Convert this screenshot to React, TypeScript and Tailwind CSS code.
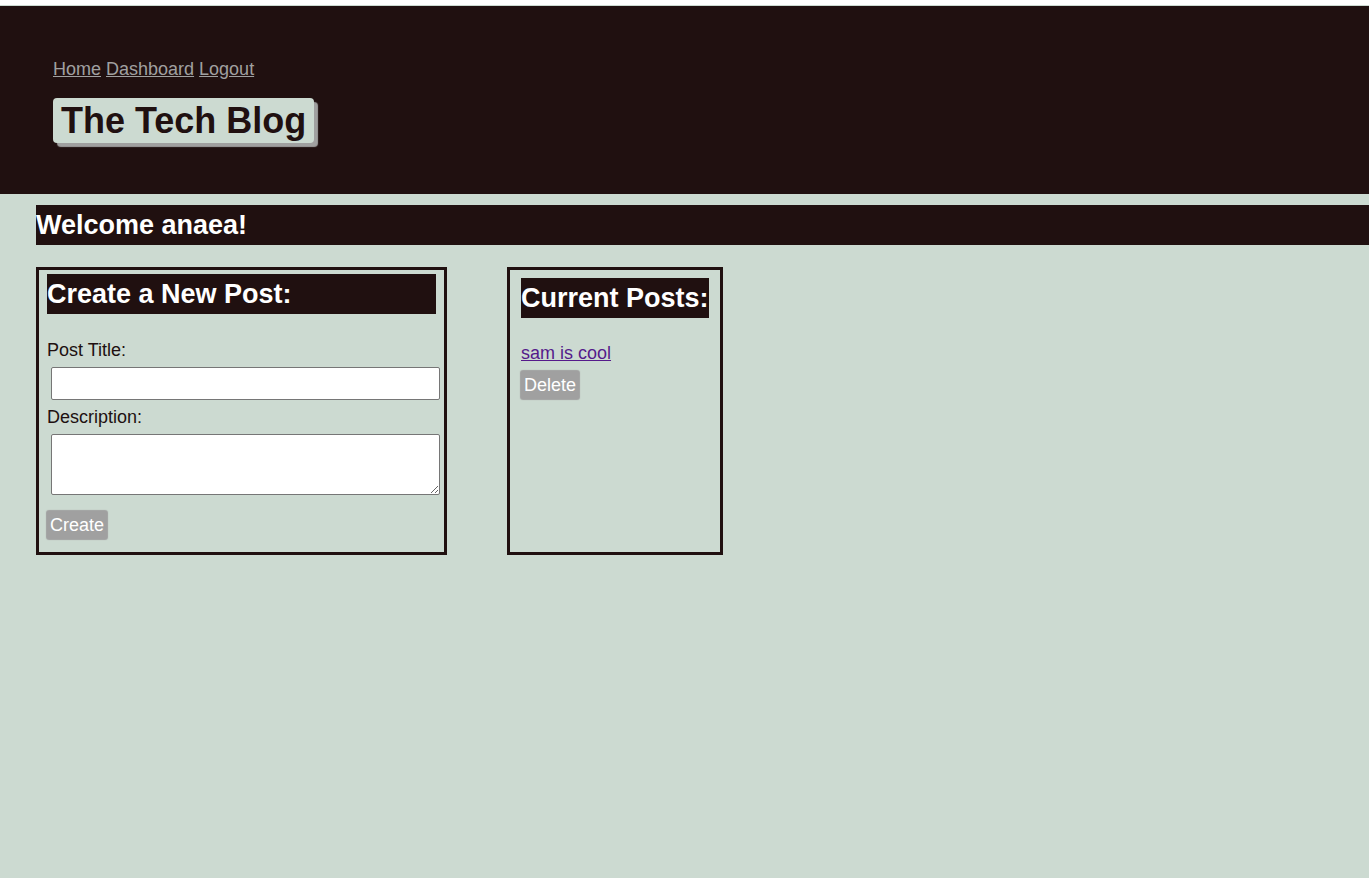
import React from "react";

const headingClass =
  "bg-[#201010] text-[27px] leading-[40px] font-bold text-white";

const buttonClass =
  "block cursor-pointer rounded-[2px] bg-[#a0a0a0] px-[3px] text-[18px] leading-7 text-white shadow-[0_0_1px_1px_#a0a0a0]";

const fieldClass =
  "mt-1 ml-1 block w-full rounded-[2px] border border-[#767676] bg-white px-1";

const navLinks = [
  { label: "Home", href: "#home" },
  { label: "Dashboard", href: "#dashboard" },
  { label: "Logout", href: "#logout" },
];

function Header() {
  return (
    <header className="bg-[#201010] px-[53px] pt-[49px] pb-[51px]">
      <nav className="flex gap-[5px] leading-7 text-[#a0a0a0]">
        {navLinks.map((link) => (
          <a key={link.label} href={link.href} className="underline">
            {link.label}
          </a>
        ))}
      </nav>
      <h1 className="mt-[15px] w-fit rounded-[4px] bg-[#ccdad1] px-2 text-[36px] leading-[45px] font-bold text-[#201010] shadow-[4px_4px_1px_#a0a0a0]">
        The Tech Blog
      </h1>
    </header>
  );
}

function NewPostForm() {
  return (
    <form
      className="w-[411px] border-3 border-[#201010] px-2 pt-1 pb-[13px]"
      onSubmit={(event) => event.preventDefault()}
    >
      <h2 className={headingClass}>Create a New Post:</h2>
      <label htmlFor="post-title" className="mt-[23px] block leading-[26px]">
        Post Title:
      </label>
      <input id="post-title" type="text" className={`${fieldClass} h-[33px]`} />
      <label htmlFor="post-description" className="mt-1 block leading-[26px]">
        Description:
      </label>
      <textarea
        id="post-description"
        className={`${fieldClass} h-[61px] resize`}
      />
      <button type="submit" className={`${buttonClass} mt-4`}>
        Create
      </button>
    </form>
  );
}

function CurrentPosts() {
  return (
    <section className="border-3 border-[#201010] px-[11px] pt-2 pb-[13px]">
      <h2 className={headingClass}>Current Posts:</h2>
      <a
        href="#post"
        className="mt-[22px] block w-fit leading-[26px] text-[#551a8b] underline"
      >
        sam is cool
      </a>
      <button type="button" className={`${buttonClass} mt-[5px]`}>
        Delete
      </button>
    </section>
  );
}

export default function App() {
  return (
    <div className="flex min-h-screen flex-col bg-[#ccdad1] font-['Liberation_Sans',Arial,sans-serif] text-[18px] text-[#201010]">
      <div className="h-[6px] border-b border-[#ccdad1] bg-white" />
      <Header />
      <main className="pt-[11px] pl-9">
        <h2 className={headingClass}>Welcome anaea!</h2>
        <div className="mt-[22px] flex gap-[60px]">
          <NewPostForm />
          <CurrentPosts />
        </div>
      </main>
    </div>
  );
}
